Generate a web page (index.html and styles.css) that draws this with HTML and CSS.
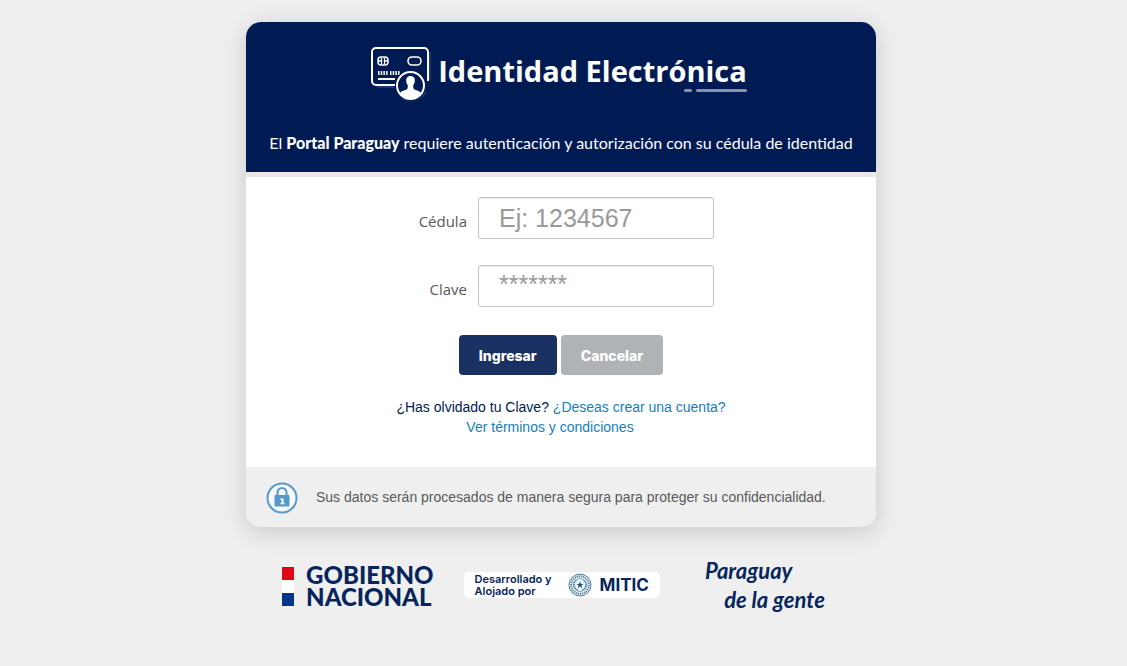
FILE: index.html
```html
<!DOCTYPE html>
<html lang="es">
<head>
<meta charset="utf-8">
<meta name="viewport" content="width=device-width, initial-scale=1">
<title>Identidad Electrónica</title>
<link rel="stylesheet" href="styles.css">
</head>
<body>
<main class="card">
  <header class="card-header">
    <div class="brand">
      <svg class="brand-icon" width="64" height="60" viewBox="0 0 64 60" fill="none" stroke="#fff" aria-hidden="true">
        <g stroke="#4c5c87" stroke-width="2" opacity=".4"><path d="M61 9v28M8 44h17M32 54.500c8 6 20 3 25-6"/></g>
        <path d="M59 38V9a4 4 0 0 0-4-4H7a4 4 0 0 0-4 4v29a4 4 0 0 0 4 4h19" stroke-width="2"/>
        <rect x="9" y="14" width="10" height="8" rx="3" stroke-width="1.5"/>
        <path d="M12.500 15v6M15.500 15v6M9 18h3M16 18h3" stroke-width="1.3"/>
        <rect x="39" y="14" width="13" height="8" rx="4" stroke-width="1.6"/>
        <path d="M9 30h10M21 30h10" stroke-width="4" stroke-dasharray="1.5 1.2"/>
        <path d="M9 36h17" stroke-width="2"/>
        <circle cx="41.500" cy="42.500" r="15.500" fill="#001b54" stroke="none"/>
        <circle cx="41.500" cy="42.500" r="13.500" stroke-width="2"/>
        <path transform="translate(.5 1)" d="M41 32c-3 0-4.500 2-4.300 4.500.1 2 .6 3.500 1.500 4.500.5 3-.5 4.500-2.500 5-3 .9-5 2-5.400 3.500a13 13 0 0 0 21.400 0c-.5-1.500-2.500-2.600-5.400-3.500-2-.5-3-2-2.500-5 .9-1 1.400-2.500 1.500-4.500.2-2.500-1.300-4.500-4.300-4.500z" fill="#fff" stroke="none"/>
      </svg>
      <div class="brand-name">
        <h1>Identidad Electrónica</h1>
        <div class="brand-rule"><span class="dot"></span><span class="dash"></span></div>
      </div>
    </div>
    <p class="lead">El <strong>Portal Paraguay</strong> requiere autenticación y autorización con su cédula de identidad</p>
  </header>
  <form class="card-body">
    <div class="field">
      <label for="cedula">Cédula</label>
      <input id="cedula" type="text" placeholder="Ej: 1234567">
    </div>
    <div class="field">
      <label for="clave">Clave</label>
      <input id="clave" class="secret" type="password" placeholder="*******">
    </div>
    <div class="actions">
      <button type="submit" class="primary">Ingresar</button>
      <button type="button" class="secondary">Cancelar</button>
    </div>
    <div class="links">
      <p><a class="dark" href="#clave">¿Has olvidado tu Clave?</a> <a href="#cuenta">¿Deseas crear una cuenta?</a></p>
      <p class="terms"><a href="#terminos">Ver términos y condiciones</a></p>
    </div>
  </form>
  <footer class="card-footer">
    <svg width="32" height="32" viewBox="0 0 32 32" fill="none" aria-hidden="true">
      <circle cx="16" cy="16" r="14.500" fill="#f6f8fa" stroke="#5799cb" stroke-width="2"/>
      <path d="M11.500 14v-3.500a4.500 4.500 0 0 1 9 0V14" stroke="#5799cb" stroke-width="2"/>
      <rect x="8.500" y="13" width="15" height="11.500" rx="1" fill="#5799cb"/>
      <path d="M14.500 16.500h3v4.500h1v1.200h-4V21h1v-3h-1z" fill="#fff"/>
    </svg>
    <p>Sus datos serán procesados de manera segura para proteger su confidencialidad.</p>
  </footer>
</main>
<section class="logos">
  <div class="gobierno">
    <div class="flag"><span class="red"></span><span class="white"></span><span class="blue"></span></div>
    <div>GOBIERNO<br>NACIONAL</div>
  </div>
  <div class="mitic">
    <div class="hosted">Desarrollado y<br>Alojado por</div>
    <svg width="24" height="24" viewBox="0 0 24 24" fill="none" stroke="#4f7f9b" aria-hidden="true">
      <circle cx="12" cy="12" r="11" fill="#edf4f6" stroke-width="1"/>
      <circle cx="12" cy="12" r="8.800" stroke-width="2" stroke-dasharray="1.200 .9"/>
      <circle cx="12" cy="12" r="6.500" stroke-width=".7"/>
      <path d="M10 17c-5-2-5-8-1-10M14 17c5-2 5-8 1-10" stroke-width="1.300" stroke-dasharray="1.500 .6"/>
      <path d="m12 8.500 1 2.400 2.500.1-2 1.600.7 2.400-2.200-1.400L9.800 15l.7-2.400-2-1.600 2.500-.1z" fill="#1d5277" stroke="none"/>
    </svg>
    <strong>MITIC</strong>
  </div>
  <div class="slogan"><span>Paraguay</span><span class="second">de la gente</span></div>
</section>
</body>
</html>
```
FILE: styles.css
```css
* { box-sizing: border-box; }
body {
  margin: 0;
  padding: 22px 5px 0 0;
  background: #efefef;
  color: #58595b;
  font-family: "Liberation Sans", Arial, sans-serif;
  font-size: 14px;
  line-height: 20px;
}
p, h1 { margin: 0; }
.card {
  max-width: 630px;
  margin: 0 auto;
  border-radius: 15px;
  overflow: hidden;
  background: #fff;
  box-shadow: 0 5px 24px rgba(0, 0, 0, .16);
}
.card-header {
  padding: 21px 16px 19px;
  background: #001b54;
  border-bottom: 5px solid #e9e7ea;
  color: #fff;
  font-family: "Open Sans", sans-serif;
  text-align: center;
}
.brand {
  display: flex;
  justify-content: center;
  gap: 5px;
  padding-right: 6px;
}
.brand-name { padding-top: 10px; }
h1 { font-size: 29px; line-height: 36px; font-weight: 700; }
.brand-rule {
  display: flex;
  justify-content: flex-end;
  gap: 4px;
}
.brand-rule span { height: 3px; border-radius: 2px; background: #8592b3; }
.dot { width: 8px; }
.dash { width: 51px; }
.lead {
  margin-top: 30px;
  font-family: Lato, sans-serif;
  font-size: 16px;
}
.lead strong { font-weight: 900; }
.card-body { padding: 20px 16px 30px; }
.field {
  display: grid;
  grid-template-columns: 205px 236px;
  column-gap: 11px;
  align-items: center;
  margin-bottom: 26px;
}
.field label {
  padding-top: 6px;
  font-family: "Open Sans", sans-serif;
  font-size: 15px;
  text-align: right;
}
.field input {
  width: 100%;
  height: 42px;
  padding: 0 20px;
  border: 1px solid #c4c4c4;
  border-radius: 3px;
  background: #fff;
  box-shadow: inset 0 1px 1px rgba(0, 0, 0, .08);
  color: #555;
  font-family: "Liberation Sans", Arial, sans-serif;
  font-size: 25px;
}
.field .secret { padding-bottom: 4px; }
.field input::placeholder { color: #999; opacity: 1; }
.actions {
  display: flex;
  justify-content: center;
  gap: 4px;
  padding-top: 2px;
}
button {
  height: 40px;
  padding: 0 20px;
  border: 0;
  border-radius: 4px;
  color: #fff;
  font-family: Inter, sans-serif;
  font-size: 14px;
  font-weight: 800;
}
.primary { background: #1a3263; }
.secondary { background: #afb3b6; }
.links { padding-top: 22px; text-align: center; }
.terms { padding-right: 22px; }
a { color: #1480bd; text-decoration: none; }
a.dark { color: #001b54; }
.card-footer {
  display: flex;
  align-items: center;
  gap: 18px;
  min-height: 60px;
  padding: 2px 20px 0;
  background: #efefef;
}
.card-footer p { padding-bottom: 2px; }
.logos {
  display: flex;
  justify-content: center;
  align-items: center;
  gap: 30px;
  max-width: 630px;
  margin: 29px auto 0;
  padding-right: 15px;
  color: #06255c;
}
.gobierno {
  display: flex;
  align-items: center;
  gap: 12px;
  padding-top: 2px;
  font-family: Lato, sans-serif;
  font-size: 24px;
  line-height: 22px;
  font-weight: 900;
}
.flag span { display: block; width: 12px; height: 13px; }
.red { background: #df0715; }
.white { background: #fff; }
.blue { background: #04358b; }
.mitic {
  display: flex;
  align-items: center;
  gap: 8px;
  height: 26px;
  padding: 0 11px;
  border-radius: 5px;
  background: #fff;
}
.hosted {
  width: 85px;
  font-family: Inter, sans-serif;
  font-size: 11px;
  line-height: 12px;
  font-weight: 600;
  white-space: nowrap;
}
.mitic strong { font-family: Inter, sans-serif; font-size: 17px; }
.slogan {
  width: 120px;
  margin-left: 15px;
  font-family: Lato, cursive;
  font-size: 22px;
  line-height: 29px;
  font-weight: 700;
  font-style: italic;
}
.slogan span { display: block; }
.slogan .second { text-align: right; }
```
